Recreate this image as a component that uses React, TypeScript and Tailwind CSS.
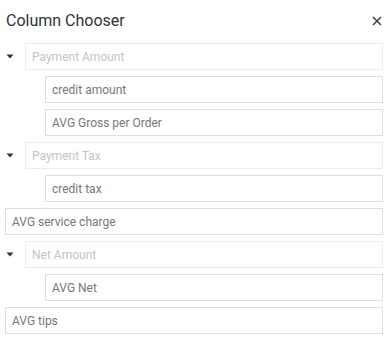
import React from "react";

type Col = { label: string; children?: string[] };

const columns: Col[] = [
  { label: "Payment Amount", children: ["credit amount", "AVG Gross per Order"] },
  { label: "Payment Tax", children: ["credit tax"] },
  { label: "AVG service charge" },
  { label: "Net Amount", children: ["AVG Net"] },
  { label: "AVG tips" },
];

const Item = ({ label, group }: { label: string; group?: boolean }) => (
  <div
    className={`flex-1 h-[27px] flex items-center px-[6px] border bg-white text-[12px] ${
      group ? "border-[#ececec] text-[#c4c4c4]" : "border-[#dedede] text-[#777777]"
    }`}
  >
    {label}
  </div>
);

const App = () => {
  return (
    <div
      className="w-[389px] h-[340px] bg-white overflow-hidden"
      style={{ fontFamily: "Roboto, 'Liberation Sans', sans-serif" }}
    >
      <div className="flex items-center justify-between pl-[6px] pr-[7px] pt-[6px] h-[36px]">
        <span className="text-[16px] text-[#333333]">Column Chooser</span>
        <svg width="10" height="10" viewBox="0 0 10 10" className="text-[#444]">
          <path d="M1 1L9 9M9 1L1 9" stroke="currentColor" strokeWidth="1.6" />
        </svg>
      </div>
      <div className="flex flex-col gap-[6px] pl-[5px] pr-[6px] pt-[7px]">
        {columns.map((c) =>
          c.children ? (
            <React.Fragment key={c.label}>
              <div className="flex items-center">
                <div className="w-[20px] flex items-center pl-[1px]">
                  <svg width="8" height="5" viewBox="0 0 8 5">
                    <path d="M0.5 0.5H7.5L4 4.5Z" fill="#333" />
                  </svg>
                </div>
                <Item label={c.label} group />
              </div>
              {c.children.map((ch) => (
                <div key={ch} className="flex pl-[40px]">
                  <Item label={ch} />
                </div>
              ))}
            </React.Fragment>
          ) : (
            <div key={c.label} className="flex">
              <Item label={c.label} />
            </div>
          )
        )}
      </div>
    </div>
  );
};

export default App;
